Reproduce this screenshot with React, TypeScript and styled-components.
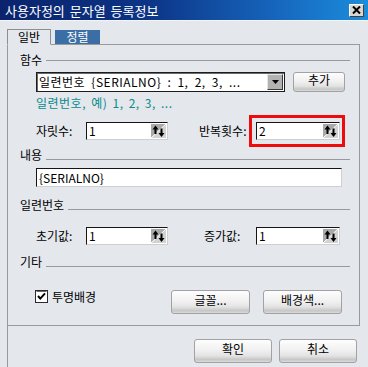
import React from "react";
import styled, { createGlobalStyle } from "styled-components";

const BG = "#e4e7ec";

const GlobalStyle = createGlobalStyle`
  html, body {
    margin: 0;
    padding: 0;
    background: ${BG};
  }
  body {
    font-family: "Noto Sans CJK KR", "Noto Sans", sans-serif;
    font-size: 12px;
    color: #000;
  }
  * { box-sizing: border-box; }
`;

const Window = styled.div`
  width: 368px;
  height: 367px;
  display: flex;
  flex-direction: column;
  background: ${BG};
  overflow: hidden;
`;

const TitleBar = styled.div`
  height: 21px;
  flex: none;
  display: flex;
  align-items: center;
  justify-content: space-between;
  padding: 0 4px 0 5px;
  background: linear-gradient(90deg, #0a236c 0%, #0c3486 40%, #1666bd 75%, #1c8ddb 100%);
  border-bottom: 1px solid #f3f5f8;
`;

const Title = styled.span`
  color: #fff;
  font-size: 13px;
  line-height: 15px;
  word-spacing: 2px;
`;

const CloseButton = styled.button`
  width: 15px;
  height: 13px;
  padding: 0;
  display: flex;
  align-items: center;
  justify-content: center;
  background: #d8d6d0;
  border: 1px solid;
  border-color: #ffffff #404040 #404040 #ffffff;
`;

const Body = styled.div`
  flex: 1;
  display: flex;
  flex-direction: column;
  padding: 8px 8px 0 7px;
`;

const TabStrip = styled.div`
  display: flex;
  align-items: flex-end;
  gap: 4px;
  height: 16px;
  position: relative;
  z-index: 1;
`;

const Tab = styled.div<{ $active?: boolean }>`
  display: flex;
  align-items: center;
  justify-content: center;
  font-size: 12px;
  line-height: 14px;
  ${(p) =>
    p.$active
      ? `
    width: 44px;
    height: 16px;
    border: 1px solid #8e8e8e;
    border-bottom-color: ${BG};
    background: ${BG};
    color: #000;
  `
      : `
    width: 45px;
    height: 14px;
    margin-bottom: 1px;
    background: #3a6ea5;
    color: #fff;
  `}
`;

const Panel = styled.div`
  width: 353px;
  height: 282px;
  margin-top: -1px;
  border: 1px solid #9a9a9a;
  padding-left: 12px;
  display: flex;
  flex-direction: column;
`;

const Heading = styled.div<{ $top: number; $center?: boolean }>`
  display: flex;
  align-items: ${(p) => (p.$center ? "center" : "flex-end")};
  gap: 4px;
  height: 14px;
  margin-top: ${(p) => p.$top}px;
  margin-right: 9px;
  line-height: 14px;

  &::after {
    content: "";
    flex: 1;
    height: 1px;
    background: #9a9a9a;
    margin-bottom: ${(p) => (p.$center ? 0 : 2)}px;
  }
`;

const Section = styled.div`
  padding-left: 16px;
  display: flex;
  flex-direction: column;
`;

const Row = styled.div<{ $top: number; $height: number }>`
  display: flex;
  align-items: center;
  margin-top: ${(p) => p.$top}px;
  height: ${(p) => p.$height}px;
`;

const Combo = styled.div`
  width: 249px;
  height: 20px;
  display: flex;
  align-items: center;
  background: #fff;
  border: 1px solid #1c1c1c;
  box-shadow: inset 1px 1px 0 #6a6a6a;
  padding-left: 2px;
`;

const ComboText = styled.span`
  flex: 1;
  line-height: 16px;
  white-space: pre;
  letter-spacing: 0.5px;
  word-spacing: 3px;
`;

const ComboArrow = styled.div`
  width: 16px;
  height: 16px;
  margin-right: 1px;
  display: flex;
  align-items: center;
  justify-content: center;
  background: #b2b2b2;
  border: 1px solid;
  border-color: #e6e6e6 #3a3a3a #3a3a3a #e6e6e6;
`;

const PushButton = styled.button<{ $w: number; $h: number }>`
  width: ${(p) => p.$w}px;
  height: ${(p) => p.$h}px;
  padding: 0 0 4px;
  border: 1px solid #a2a2a2;
  border-radius: 3px;
  background: linear-gradient(#fdfdfd 0%, #f1f1f1 45%, #e3e3e3 72%, #c6c6c6 90%, #dcdcdc 100%);
  font-family: "Noto Sans CJK KR", "Noto Sans", sans-serif;
  font-size: 12px;
  line-height: 14px;
  color: #000;
`;

const Hint = styled.div`
  margin-top: 4px;
  line-height: 14px;
  color: #0a8a8c;
  letter-spacing: 0.5px;
  word-spacing: 2px;
`;

const FieldLabel = styled.span<{ $gap?: number; $w: number }>`
  width: ${(p) => p.$w}px;
  margin-left: ${(p) => p.$gap ?? 0}px;
  line-height: 14px;
  flex: none;
`;

const InputBox = styled.div<{ $w: number; $h?: number }>`
  width: ${(p) => p.$w}px;
  height: ${(p) => p.$h ?? 18}px;
  flex: none;
  display: flex;
  align-items: center;
  background: #fff;
  border: 1px solid;
  border-color: #151515 #cfcfcf #cfcfcf #151515;
  padding-left: 2px;
  line-height: 14px;
  position: relative;
`;

const Highlight = styled.div`
  position: absolute;
  top: -8px;
  bottom: -8px;
  left: -8px;
  right: -6px;
  border: 3px solid #ee0b0b;
  pointer-events: none;
`;

const InputText = styled.span`
  flex: 1;
`;

const OptionsRow = styled.div`
  display: flex;
  align-items: flex-start;
  margin-top: 21px;
  margin-right: 17px;
  height: 24px;
`;

const CheckLabel = styled.label`
  display: flex;
  align-items: center;
  gap: 4px;
  margin-left: -1px;
  line-height: 13px;
`;

const ButtonGroup = styled.div<{ $gap: number }>`
  display: flex;
  gap: ${(p) => p.$gap}px;
  margin-left: auto;
`;

const Footer = styled.div`
  flex: 1;
  display: flex;
  justify-content: flex-end;
  align-items: flex-start;
  gap: 7px;
  padding: 13px 3px 0 0;
  border-left: 1px solid #9a9a9a;
`;

function SpinIcon() {
  return (
    <svg width="15" height="14" viewBox="0 0 15 14" style={{ marginRight: 1, flex: "none" }}>
      <rect width="15" height="14" fill="#a9a9a9" />
      <polygon points="15,0 15,14 0,14" fill="#d2d2d2" />
      <line x1="0" y1="14" x2="15" y2="0" stroke="#ffffff" strokeWidth="1" />
      <path d="M4.5 1.5 L1.5 5.5 H3.5 V10 H5.5 V5.5 H7.5 Z" fill="#000" />
      <path d="M10.5 13 L7.5 9 H9.5 V4.5 H11.5 V9 H13.5 Z" fill="#000" />
    </svg>
  );
}

function SpinField({ w, value, highlight }: { w: number; value: string; highlight?: boolean }) {
  return (
    <InputBox $w={w}>
      <InputText>{value}</InputText>
      <SpinIcon />
      {highlight && <Highlight />}
    </InputBox>
  );
}

function CheckIcon() {
  return (
    <svg width="13" height="13" viewBox="0 0 13 13">
      <rect x="0.5" y="0.5" width="12" height="12" fill="#fff" stroke="#2a2a2a" />
      <line x1="1.5" y1="1.5" x2="11.5" y2="1.5" stroke="#6a6a6a" />
      <path d="M3 6 L5.3 8.6 L10 3.4" stroke="#000" strokeWidth="2" fill="none" />
    </svg>
  );
}

export default function App() {
  return (
    <>
      <GlobalStyle />
      <Window>
        <TitleBar>
          <Title>사용자정의 문자열 등록정보</Title>
          <CloseButton aria-label="닫기">
            <svg width="9" height="8" viewBox="0 0 9 8">
              <path d="M1 0.5 L8 7.5 M8 0.5 L1 7.5" stroke="#000" strokeWidth="2" />
            </svg>
          </CloseButton>
        </TitleBar>
        <Body>
          <TabStrip>
            <Tab $active>일반</Tab>
            <Tab>정렬</Tab>
          </TabStrip>
          <Panel>
            <Heading $top={8} $center>함수</Heading>
            <Section>
              <Row $top={5} $height={20}>
                <Combo>
                  <ComboText>일련번호 {"{SERIALNO}"} : 1, 2, 3, ...</ComboText>
                  <ComboArrow>
                    <svg width="7" height="4" viewBox="0 0 7 4">
                      <polygon points="0,0 7,0 3.5,4" fill="#000" />
                    </svg>
                  </ComboArrow>
                </Combo>
                <PushButton $w={52} $h={20} style={{ marginLeft: 8 }}>추가</PushButton>
              </Row>
              <Hint>일련번호, 예) 1, 2, 3, ...</Hint>
              <Row $top={12} $height={18}>
                <FieldLabel $w={50}>자릿수:</FieldLabel>
                <SpinField w={82} value="1" />
                <FieldLabel $gap={31} $w={57}>반복횟수:</FieldLabel>
                <SpinField w={84} value="2" highlight />
              </Row>
            </Section>
            <Heading $top={8}>내용</Heading>
            <Section>
              <Row $top={6} $height={19}>
                <InputBox $w={306} $h={19}>
                  <InputText>{"{SERIALNO}"}</InputText>
                </InputBox>
              </Row>
            </Section>
            <Heading $top={11}>일련번호</Heading>
            <Section>
              <Row $top={15} $height={18}>
                <FieldLabel $w={50}>초기값:</FieldLabel>
                <SpinField w={82} value="1" />
                <FieldLabel $gap={36} $w={52}>증가값:</FieldLabel>
                <SpinField w={84} value="1" />
              </Row>
            </Section>
            <Heading $top={10}>기타</Heading>
            <Section>
              <OptionsRow>
                <CheckLabel>
                  <CheckIcon />
                  투명배경
                </CheckLabel>
                <ButtonGroup $gap={13}>
                  <PushButton $w={79} $h={24}>글꼴...</PushButton>
                  <PushButton $w={79} $h={24}>배경색...</PushButton>
                </ButtonGroup>
              </OptionsRow>
            </Section>
          </Panel>
          <Footer>
            <PushButton $w={78} $h={24}>확인</PushButton>
            <PushButton $w={78} $h={24}>취소</PushButton>
          </Footer>
        </Body>
      </Window>
    </>
  );
}
